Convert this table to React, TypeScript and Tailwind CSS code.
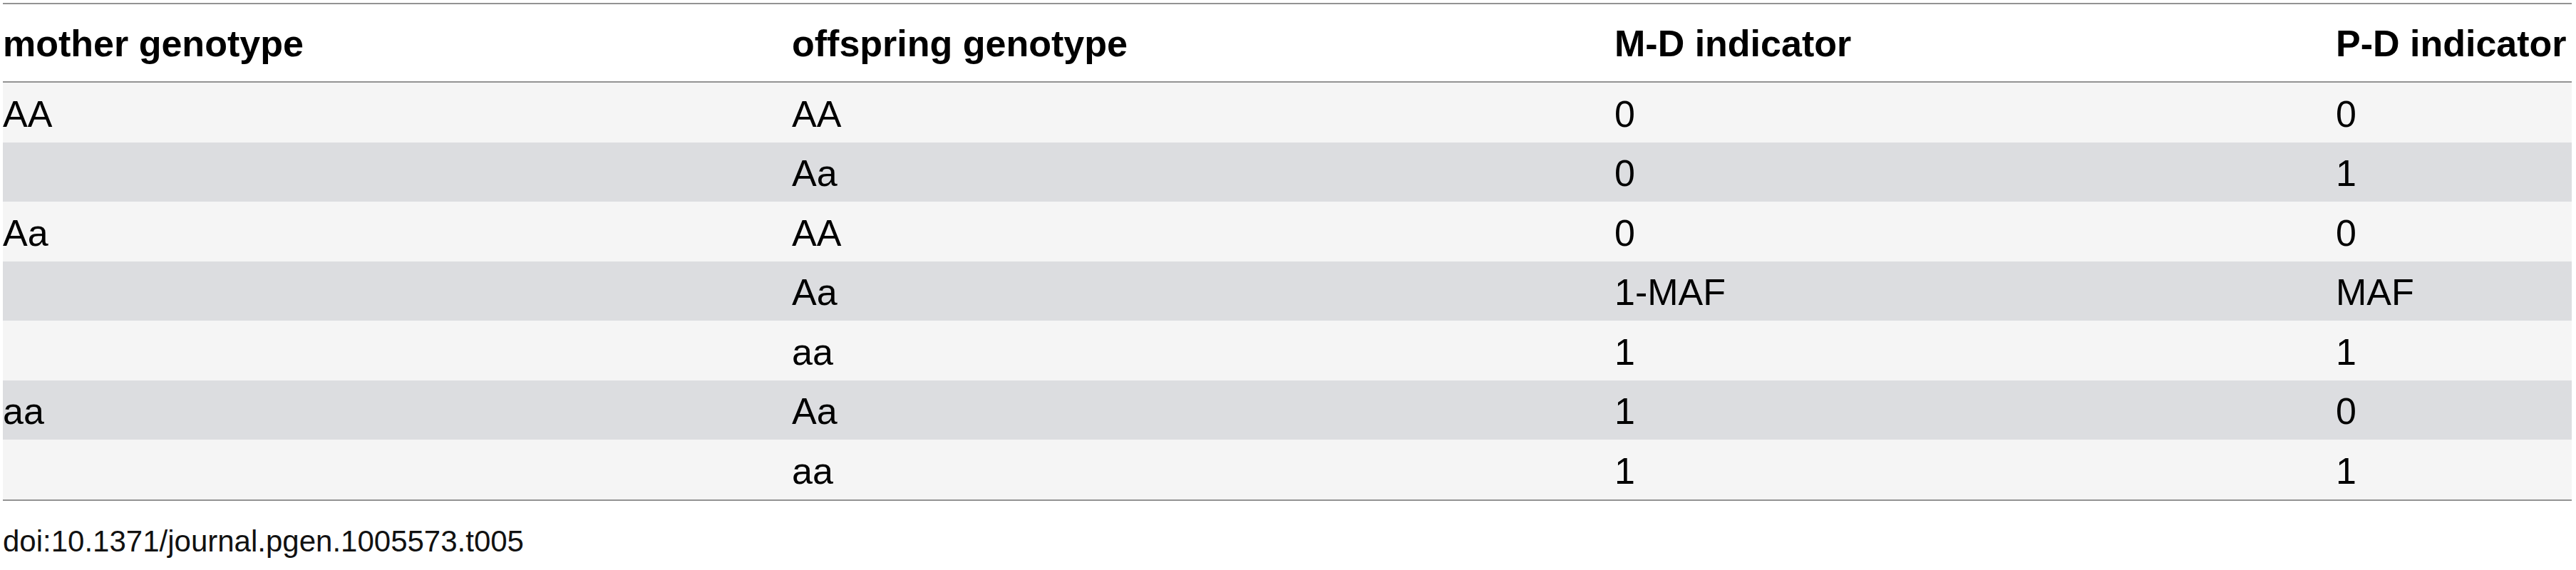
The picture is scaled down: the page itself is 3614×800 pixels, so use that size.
import React from "react";

const rows: { m: string; o: string; md: string; pd: string }[] = [
  { m: "AA", o: "AA", md: "0", pd: "0" },
  { m: "", o: "Aa", md: "0", pd: "1" },
  { m: "Aa", o: "AA", md: "0", pd: "0" },
  { m: "", o: "Aa", md: "1-MAF", pd: "MAF" },
  { m: "", o: "aa", md: "1", pd: "1" },
  { m: "aa", o: "Aa", md: "1", pd: "0" },
  { m: "", o: "aa", md: "1", pd: "1" },
];

export default function App() {
  return (
    <div className="w-[3614px] h-[800px] bg-white text-black font-['Liberation_Sans',Arial,Helvetica,sans-serif] overflow-hidden">
      <div className="ml-[4px] w-[3604px] pt-[4px]">
        <div className="grid grid-cols-[1107px_1154px_1012px_331px] h-[112px] items-center border-t-2 border-b-2 border-[#939393] text-[52px] font-bold leading-[60px] whitespace-nowrap">
          <div className="pt-[2px]">mother genotype</div>
          <div className="pt-[2px]">offspring genotype</div>
          <div className="pt-[2px]">M-D indicator</div>
          <div className="pt-[2px]">P-D indicator</div>
        </div>
        <div className="border-b-2 border-[#939393]">
          {rows.map((r, i) => (
            <div
              key={i}
              className={
                "grid grid-cols-[1107px_1154px_1012px_331px] h-[83.5px] items-center text-[52px] leading-[60px] whitespace-nowrap " +
                (i % 2 === 0 ? "bg-[#f5f5f5]" : "bg-[#dcdde0]")
              }
            >
              <div className="pt-[4px]">{r.m}</div>
              <div className="pt-[4px]">{r.o}</div>
              <div className="pt-[4px]">{r.md}</div>
              <div className="pt-[4px]">{r.pd}</div>
            </div>
          ))}
        </div>
      </div>
      <div className="mt-[33px] ml-[4px] text-[42px] leading-[48px] text-[#111]">
        doi:10.1371/journal.pgen.1005573.t005
      </div>
    </div>
  );
}
